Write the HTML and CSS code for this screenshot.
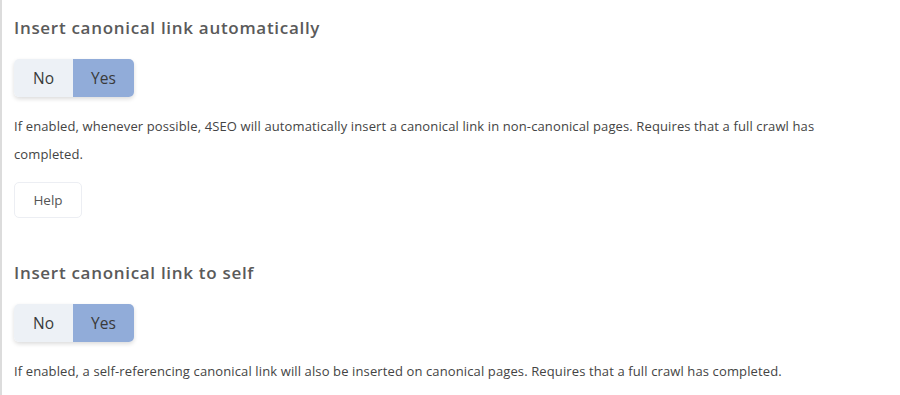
FILE: index.html
```html
<!DOCTYPE html>
<html lang="en">
<head>
<meta charset="utf-8">
<title>Canonical settings</title>
<link rel="stylesheet" href="styles.css">
</head>
<body>
<div class="panel">
  <section class="setting">
    <h3 class="setting-title">Insert canonical link automatically</h3>
    <div class="toggle">
      <span class="toggle-opt">No</span>
      <span class="toggle-opt is-active">Yes</span>
    </div>
    <p class="setting-desc">If enabled, whenever possible, 4SEO will automatically insert a canonical link in non-canonical pages. Requires that a full crawl has completed.</p>
    <button class="help-btn" type="button">Help</button>
  </section>
  <section class="setting">
    <h3 class="setting-title">Insert canonical link to self</h3>
    <div class="toggle">
      <span class="toggle-opt">No</span>
      <span class="toggle-opt is-active">Yes</span>
    </div>
    <p class="setting-desc">If enabled, a self-referencing canonical link will also be inserted on canonical pages. Requires that a full crawl has completed.</p>
  </section>
</div>
</body>
</html>
```
FILE: styles.css
```css
html, body {
  margin: 0;
  padding: 0;
  background: #ffffff;
}
body {
  font-family: "Open Sans", "Noto Sans", "Liberation Sans", sans-serif;
  color: #444;
}
.panel {
  border-left: 2px solid #dcdcdc;
  padding: 16px 40px 0 12px;
  min-height: 395px;
  box-sizing: border-box;
  width: 900px;
}
.setting {
  display: flex;
  flex-direction: column;
  align-items: flex-start;
}
.setting + .setting {
  margin-top: 43px;
}
.setting-title {
  margin: 0;
  font-size: 17px;
  line-height: 24px;
  font-weight: 600;
  letter-spacing: 0.7px;
  color: #5a5a5a;
}
.toggle {
  display: flex;
  margin-top: 19px;
  height: 38px;
  border-radius: 5px;
  overflow: hidden;
  box-shadow: 0 2px 4px rgba(0, 0, 0, 0.14);
}
.toggle-opt {
  display: flex;
  align-items: center;
  justify-content: center;
  font-size: 15.5px;
  color: #3a3a3a;
  background: #edf1f6;
  width: 59px;
}
.toggle-opt.is-active {
  background: #91acd9;
  width: 61px;
}
.setting-desc {
  margin: 15px 0 0;
  font-size: 13px;
  line-height: 28px;
  letter-spacing: 0.12px;
  color: #444;
}
.help-btn {
  margin-top: 14px;
  width: 68px;
  height: 36px;
  border: 1px solid #eceef3;
  border-radius: 5px;
  background: #fff;
  font-family: inherit;
  font-size: 13.5px;
  color: #555;
  padding: 0;
}
```
